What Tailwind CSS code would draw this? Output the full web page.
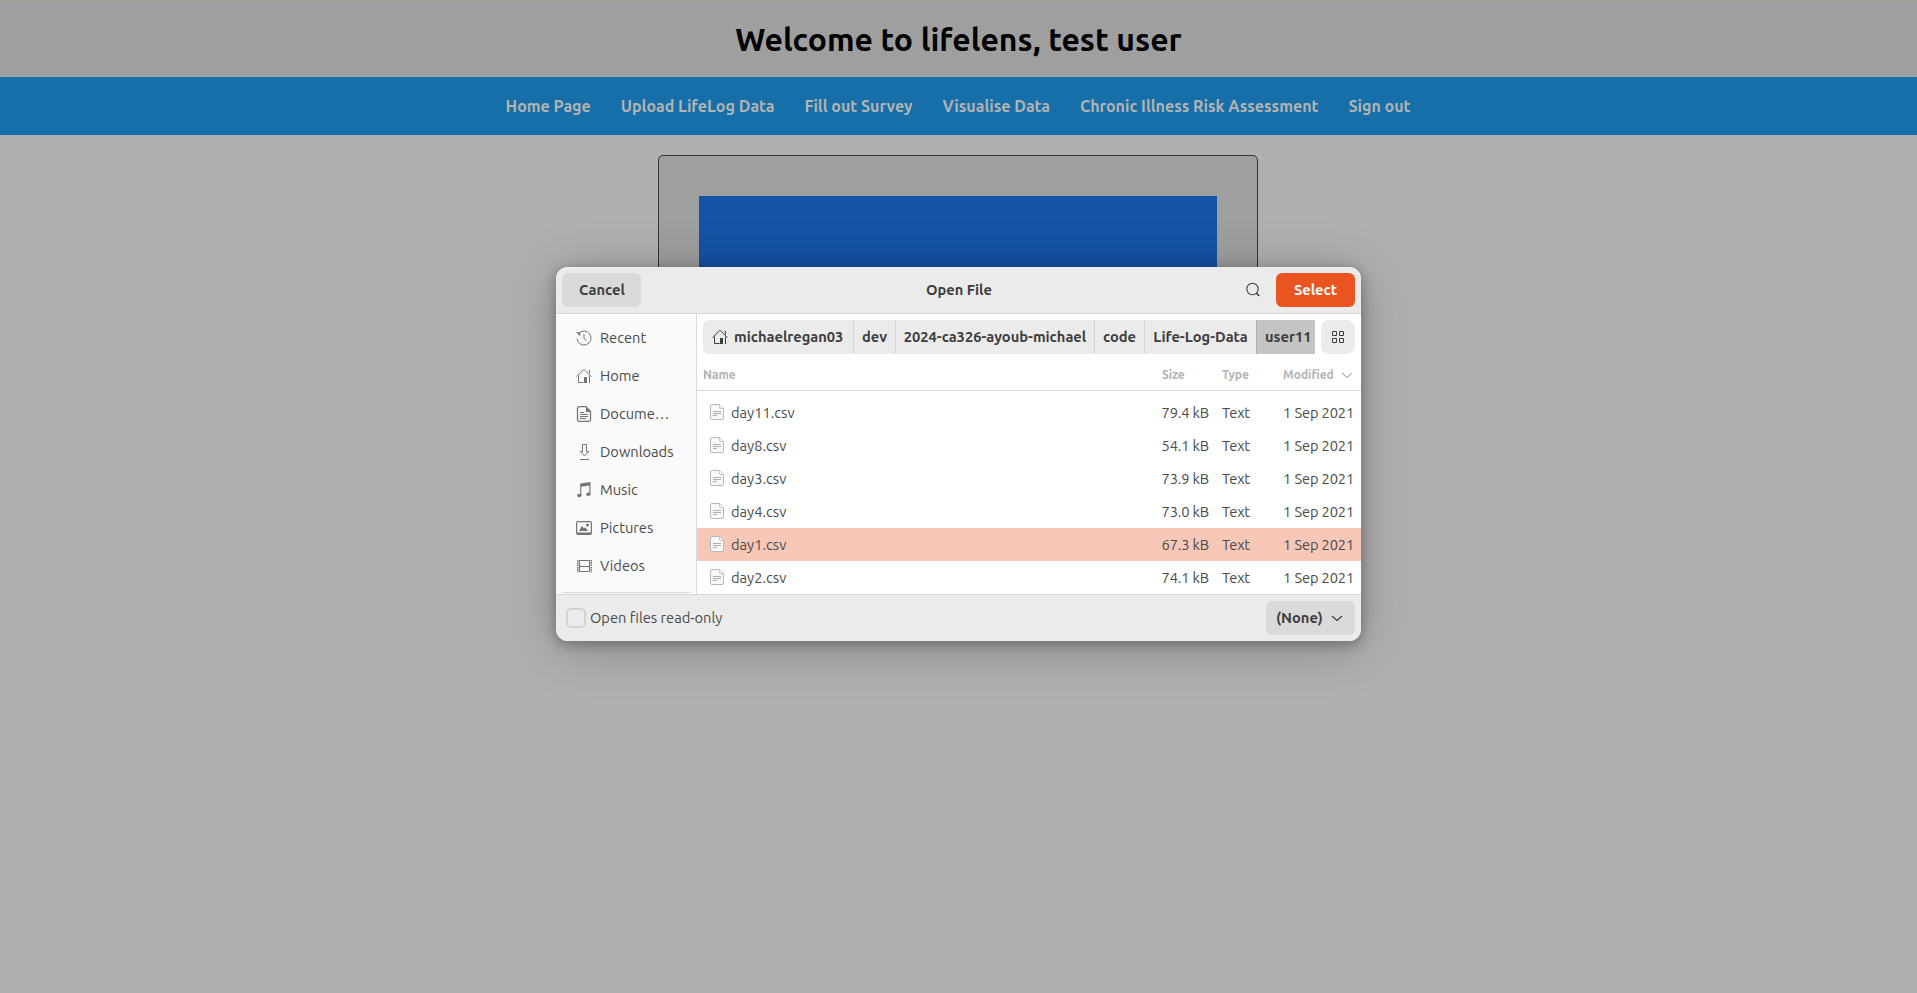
<!DOCTYPE html>
<html lang="en">
<head>
<meta charset="utf-8">
<title>lifelens</title>
<script src="https://cdn.jsdelivr.net/npm/@tailwindcss/browser@4"></script>
</head>
<body class="h-screen overflow-hidden bg-[#b0b0b0] font-['Ubuntu','Noto_Sans',sans-serif] whitespace-nowrap">
<svg class="hidden">
  <symbol id="house" viewBox="0 0 16 16"><path d="M.6 8.600 8 1.200l7.400 7.400M2.500 7.500v7h5M13.500 7.500V15M12.500 2.500h1v3" fill="none" stroke="currentColor"/><path d="M8 9h3v6H8z" fill="currentColor"/></symbol>
  <symbol id="file" viewBox="0 0 16 18"><path d="M3 1.500h7.500l4 4V15a1.500 1.500 0 0 1-1.500 1.500H3A1.500 1.500 0 0 1 1.500 15V3A1.500 1.500 0 0 1 3 1.500z" fill="#f8f8f8" stroke="#b8b8b8"/><path d="M10.500 1.500v2.500a1.500 1.500 0 0 0 1.500 1.500h2.500z" fill="#fff" stroke="#c8c8c8"/><path d="M4 8.500h8M4 10.500h8M4 12.500h4" stroke="#b0b0b0" fill="none"/></symbol>
</svg>

<header class="flex h-[77px] items-center justify-center border-t border-[#98a191] bg-[#9f9f9f]">
  <h1 class="text-[32px] leading-9 font-bold text-black">Welcome to lifelens, test user</h1>
</header>
<nav class="flex h-[58px] items-center justify-center gap-[30px] bg-[#166fa8] pr-px text-base font-bold text-[#b3b3b3]">
  <a>Home Page</a><a>Upload LifeLog Data</a><a>Fill out Survey</a><a>Visualise Data</a><a>Chronic Illness Risk Assessment</a><a>Sign out</a>
</nav>
<main class="ml-[658px] mt-5 h-[420px] w-[600px] rounded-[5px] border border-[#333338] bg-[#9f9f9f] p-10">
  <div class="h-full bg-[#1553a5]"></div>
</main>

<div class="absolute top-[267px] left-[556px] flex h-[374px] w-[805px] flex-col overflow-hidden rounded-xl bg-white text-[14.667px] leading-5 text-[#4a4a4a] shadow-[0_3px_12px_1px_rgba(0,0,0,0.25),0_6px_50px_rgba(0,0,0,0.25)]">
  <div class="grid h-[47px] shrink-0 grid-cols-[1fr_auto_1fr] items-center border-b border-[#d6d6d6] bg-[#ebebeb] px-1.5 font-bold text-[#3d3d3d]">
    <button class="h-[34px] w-[79px] rounded-md bg-[#dadada] pl-px">Cancel</button>
    <div class="pl-px text-center">Open File</div>
    <div class="flex items-center justify-end gap-[15px]">
      <svg class="size-4" viewBox="0 0 16 16" fill="none" stroke="currentColor"><circle cx="7.500" cy="7" r="5.700" stroke-width="1.100"/><path d="m11.200 11 3 3" stroke-width="1.700"/></svg>
      <button class="h-[34px] w-[79px] rounded-md bg-[#e95420] text-white">Select</button>
    </div>
  </div>

  <div class="flex h-[280px] shrink-0">
    <aside class="w-[141px] shrink-0 border-r border-[#dadada] bg-[#fafafa] px-1.5 pt-[5px]">
      <div class="flex h-[38px] items-center gap-2 pl-3.5"><svg class="size-4 text-[#747474]" viewBox="0 0 16 16" fill="none" stroke="currentColor"><path d="M2.600 3.600A7 7 0 1 1 1 8.500"/><path d="M8 4v4.500l2.500 2"/><path d="M0 2.200h4.200v4z" fill="currentColor" stroke="none"/></svg>Recent</div>
      <div class="flex h-[38px] items-center gap-2 pl-3.5"><svg class="size-4 text-[#747474]"><use href="#house"/></svg>Home</div>
      <div class="flex h-[38px] items-center gap-2 pl-3.5"><svg class="size-4 text-[#747474]" viewBox="0 0 16 16" fill="none" stroke="currentColor"><path d="M10.500.7H3A1.500 1.500 0 0 0 1.500 2.200v11.600A1.500 1.500 0 0 0 3 15.300h10a1.500 1.500 0 0 0 1.500-1.500V5" stroke-width="1.300"/><path d="M10 0l5 5v1h-5z" fill="currentColor" stroke="none"/><path d="M4 6.500h4M4 8.500h8M4 10.500h8M4 12.500h6"/></svg>Docume…</div>
      <div class="flex h-[38px] items-center gap-2 pl-3.5"><svg class="size-4 text-[#747474]" viewBox="0 0 16 16" fill="none" stroke="currentColor"><path d="M6.500.5h4v7h2.200L8.500 12 4.300 7.500h2.200zM4 15.500h9"/></svg>Downloads</div>
      <div class="flex h-[38px] items-center gap-2 pl-3.5"><svg class="size-4 text-[#747474]" viewBox="0 0 16 16" fill="currentColor"><path d="M4.200 1.500 14.500 0v12.500h-1.200V3.500l-8 1.200V14H4.200z"/><ellipse cx="3.300" cy="13.500" rx="2.100" ry="1.700"/><ellipse cx="12.300" cy="12.300" rx="2.100" ry="1.700"/></svg>Music</div>
      <div class="flex h-[38px] items-center gap-2 pl-3.5"><svg class="size-4 text-[#747474]" viewBox="0 0 16 16"><rect x=".6" y="1.600" width="14.800" height="12.800" rx="1.500" fill="none" stroke="currentColor" stroke-width="1.200"/><path d="M1 12.500h14V15H1zM3 11l3-5.200 2 2.700 1.300-1.300L12 11z" fill="currentColor"/><circle cx="11.500" cy="5" r="1.500" fill="currentColor"/></svg>Pictures</div>
      <div class="flex h-[38px] items-center gap-2 pl-3.5"><svg class="size-4 text-[#747474]" viewBox="0 0 16 16" fill="none" stroke="currentColor"><path d="M3.500 2.500h10v11h-10zM3.500 8.500h10"/><path d="M1.800 2v12.500M15.200 2v12.500" stroke-width="1.600" stroke-dasharray="1.500 .8"/></svg>Videos</div>
      <div class="mt-[7px] h-px bg-[#dadada]"></div>
    </aside>

    <section class="flex min-w-0 flex-1 flex-col">
      <div class="flex gap-1.5 px-1.5 pt-1.5">
        <div class="flex h-[34px] w-[612px] overflow-hidden rounded-l-md bg-[#ebebeb] font-bold leading-[34px] text-[#3d3d3d]">
          <div class="flex w-[151px] shrink-0 items-center gap-1.5 border-r border-[#d6d6d6] pl-[9px]"><svg class="size-4"><use href="#house"/></svg>michaelregan03</div>
          <div class="w-[42px] shrink-0 border-r border-[#d6d6d6] text-center">dev</div>
          <div class="w-[199px] shrink-0 border-r border-[#d6d6d6] text-center">2024-ca326-ayoub-michael</div>
          <div class="w-[50px] shrink-0 border-r border-[#d6d6d6] text-center">code</div>
          <div class="w-[111px] shrink-0 text-center">Life-Log-Data</div>
          <div class="w-[59px] shrink-0 border-l border-[#adadad] bg-[#c4c4c4] pl-2">user11</div>
        </div>
        <button class="flex size-[34px] items-center justify-center rounded-lg bg-[#ebebeb] text-[#3d3d3d]"><svg class="size-3" viewBox="0 0 12 12" fill="none" stroke="currentColor"><path d="M.5.5h4v4h-4zM7.500.5h4v4h-4zM.5 7.500h4v4h-4zM7.500 7.500h4v4h-4z"/></svg></button>
      </div>
      <div class="flex h-[37px] items-center border-b border-[#dadada] pt-[5px] pl-1.5 text-xs font-bold text-[#b3b3b3]">
        <div class="w-[459px]">Name</div><div class="w-[60px]">Size</div><div class="w-[61px]">Type</div><div class="w-[58px]">Modified</div>
        <svg class="h-3 w-3" viewBox="0 0 12 12" fill="none" stroke="currentColor" stroke-width="1.200"><path d="m1 4 5 4.500L11 4"/></svg>
      </div>
      <div id="rows" class="mt-[5px]"></div>
    </section>
  </div>

  <div class="flex flex-1 items-center border-t border-[#d6d6d6] bg-[#ebebeb] pr-1.5 pl-2.5">
    <span class="mr-1 size-5 rounded-[5px] border-2 border-[#d2d2d2]"></span>Open files read-only
    <button class="ml-auto flex h-[34px] w-[89px] items-center gap-2 rounded-md bg-[#dadada] pl-2.5 font-bold text-[#3d3d3d]">(None)<svg class="h-3 w-3" viewBox="0 0 12 12" fill="none" stroke="currentColor" stroke-width="1.200"><path d="m1 4 5 4.500L11 4"/></svg></button>
  </div>
</div>
<script>
const files = [['day11.csv','79.4 kB'],['day8.csv','54.1 kB'],['day3.csv','73.9 kB'],['day4.csv','73.0 kB'],['day1.csv','67.3 kB'],['day2.csv','74.1 kB']];
document.getElementById('rows').innerHTML = files.map(([n, s]) => `
<div class="flex h-[33px] items-center pr-[7px] pl-3 ${n === 'day1.csv' ? 'bg-[#f7c7b7]' : ''}">
  <svg class="mr-1.5 mb-px h-[18px] w-4"><use href="#file"/></svg><div class="w-[370px]">${n}</div><div class="w-[108px] text-right tracking-[-0.15px]">${s}</div><div class="ml-[13px] tracking-[-0.2px]">Text</div><div class="ml-auto tracking-[-0.15px]">1 Sep 2021</div>
</div>`).join('');
</script>
</body>
</html>
